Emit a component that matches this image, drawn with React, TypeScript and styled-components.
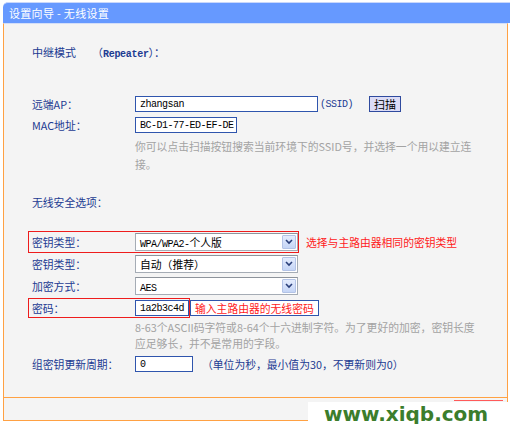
import styled, { createGlobalStyle } from "styled-components";

const GlobalStyle = createGlobalStyle`
  html, body {
    margin: 0;
    padding: 0;
    background: #ffffff;
  }
  body {
    font-family: "Noto Sans CJK SC", "Liberation Sans", sans-serif;
    font-size: 10.8px;
  }
`;

const ORANGE = "#ffa143";
const NAVY = "#1c3b92";
const MONO = `"Liberation Mono", "Noto Sans CJK SC", monospace`;

const Page = styled.div`
  position: relative;
  width: 510px;
  height: 424px;
  overflow: hidden;
  padding-top: 2px;
  box-sizing: border-box;
`;

const Header = styled.div`
  margin-left: 3px;
  height: 21px;
  background: #6699ff;
  border-top: 1px solid #c9d7fb;
  border-top-left-radius: 5px;
  display: flex;
  align-items: center;
  padding-left: 6px;
  box-sizing: border-box;
`;

const Title = styled.span`
  color: #ffffff;
  font-size: 11px;
  letter-spacing: 0.3px;
`;

const Panel = styled.div`
  margin-left: 3px;
  width: 505px;
  box-sizing: border-box;
  background: #f4f4f4;
  border-top: 1px solid #d3def8;
  border-left: 1px solid ${ORANGE};
  border-right: 1px solid ${ORANGE};
  border-bottom: 1px solid ${ORANGE};
  height: 375px;
  padding-left: 24px;
  display: flex;
  flex-direction: column;
`;

const Footer = styled.div`
  margin-left: 3px;
  width: 505px;
  height: 23px;
  box-sizing: border-box;
  background: #f4f4f4;
  border-left: 1px solid ${ORANGE};
  border-right: 1px solid ${ORANGE};
  border-bottom: 1px solid ${ORANGE};
`;

const Line = styled.div<{ $mt: number }>`
  display: flex;
  align-items: center;
  margin-top: ${({ $mt }) => $mt}px;
`;

const Field = styled.div<{ $boxed?: boolean; $h?: number }>`
  display: flex;
  align-items: center;
  height: ${({ $h }) => $h ?? 20}px;
  padding-left: 3px;
  border: 1px solid ${({ $boxed }) => ($boxed ? "#ee1c1c" : "transparent")};
  width: fit-content;
`;

const Label = styled.span`
  width: 103px;
  flex: none;
  color: ${NAVY};
  font-size: 10.8px;
  white-space: nowrap;
`;

const Mode = styled.span`
  color: ${NAVY};
  font-size: 11px;
  display: flex;
  align-items: center;
  gap: 16px;
`;

const Mono = styled.span`
  font-family: ${MONO};
  font-size: 10px;
  letter-spacing: -0.3px;
  font-weight: bold;
`;

const TextInput = styled.div<{ $w: number }>`
  width: ${({ $w }) => $w}px;
  height: 16px;
  box-sizing: border-box;
  border: 1px solid #2f55ad;
  background: #ffffff;
  padding-left: 4px;
  display: flex;
  align-items: center;
  color: #000;
  font-family: ${MONO};
  font-size: 10px;
  letter-spacing: -0.5px;
`;

const Select = styled.div`
  width: 163px;
  height: 18px;
  box-sizing: border-box;
  border: 1px solid #a5acb5;
  border-top-color: #8d939b;
  background: #ffffff;
  display: flex;
  align-items: center;
  padding-left: 4px;
  padding-right: 1px;
  color: #000;
  font-size: 10.8px;
`;

const SelectText = styled.span`
  flex: 1;
  white-space: nowrap;
`;

const SelectLatin = styled.span`
  font-family: ${MONO};
  font-size: 10px;
  letter-spacing: -0.5px;
`;

const Arrow = styled.div`
  width: 14px;
  height: 14px;
  box-sizing: border-box;
  border: 1px solid #b3c3e6;
  border-radius: 1px;
  background: linear-gradient(#e4ecfd, #c5d5f6);
  display: flex;
  align-items: center;
  justify-content: center;
`;

const Small = styled.span`
  color: ${NAVY};
  font-family: ${MONO};
  font-size: 10px;
  letter-spacing: -0.5px;
  margin-left: 1px;
`;

const ScanButton = styled.div`
  margin-left: 16px;
  width: 32px;
  height: 16px;
  box-sizing: border-box;
  border: 1px solid #2f4a9e;
  background: #dcdcf6;
  display: flex;
  align-items: center;
  justify-content: center;
  color: #000;
  font-size: 11px;
`;

const Hint = styled.div<{ $lh: number; $mt: number }>`
  margin-left: 107px;
  margin-top: ${({ $mt }) => $mt}px;
  width: 340px;
  color: #a3a3a3;
  line-height: ${({ $lh }) => $lh}px;
  font-size: 10.8px;
`;

const RedNote = styled.span<{ $outlined?: boolean }>`
  color: #ff1a1a;
  font-size: 10.8px;
  white-space: nowrap;
  ${({ $outlined }) =>
    $outlined
      ? `border: 1px solid #2f55ad; background: #fff; height: 16px; box-sizing: border-box; display: flex; align-items: center; padding: 0 4px;`
      : `margin-left: 7px;`}
`;

const BlueNote = styled.span`
  color: ${NAVY};
  font-size: 10.8px;
  margin-left: 8px;
  white-space: nowrap;
`;

const Watermark = styled.div`
  position: absolute;
  left: 308px;
  top: 402px;
  width: 202px;
  height: 22px;
  background: #ffffff;
  display: flex;
  align-items: flex-end;
  padding-left: 16px;
  box-sizing: border-box;
  color: #3b7d2c;
  font-family: "DejaVu Sans", "Liberation Sans", sans-serif;
  font-weight: bold;
  font-size: 20px;
  line-height: 20px;
  overflow: hidden;
`;

const RedMark = styled.div`
  position: absolute;
  left: 454px;
  top: 400px;
  width: 49px;
  height: 1px;
  background: #ff5a5a;
`;

const Chevron = () => (
  <svg width="8" height="6" viewBox="0 0 8 6">
    <path d="M1 1 L4 4 L7 1" fill="none" stroke="#2a3f7a" strokeWidth="1.6" />
  </svg>
);

const Dropdown = ({ latin, cjk }: { latin?: string; cjk?: string }) => (
  <Select>
    <SelectText>
      {latin && <SelectLatin>{latin}</SelectLatin>}
      {cjk}
    </SelectText>
    <Arrow>
      <Chevron />
    </Arrow>
  </Select>
);

export default function App() {
  return (
    <>
      <GlobalStyle />
      <Page>
        <Header>
          <Title>设置向导 - 无线设置</Title>
        </Header>
        <Panel>
          <Line $mt={17}>
            <Field>
              <Mode>
                <span>中继模式</span>
                <span>
                  （<Mono>Repeater</Mono>）：
                </span>
              </Mode>
            </Field>
          </Line>

          <Line $mt={31}>
            <Field $h={18}>
              <Label>远端AP：</Label>
              <TextInput $w={183}>zhangsan</TextInput>
            </Field>
            <Small>(SSID)</Small>
            <ScanButton>扫描</ScanButton>
          </Line>

          <Line $mt={1}>
            <Field $h={18}>
              <Label>MAC地址：</Label>
              <TextInput $w={102}>BC-D1-77-ED-EF-DE</TextInput>
            </Field>
          </Line>

          <Hint $lh={18} $mt={2}>
            你可以点击扫描按钮搜索当前环境下的SSID号，并选择一个用以建立连接。
          </Hint>

          <Line $mt={19}>
            <Field $h={18}>
              <Label>无线安全选项：</Label>
            </Field>
          </Line>

          <Line $mt={19}>
            <Field $boxed>
              <Label>密钥类型：</Label>
              <Dropdown latin="WPA/WPA2-" cjk="个人版" />
            </Field>
            <RedNote>选择与主路由器相同的密钥类型</RedNote>
          </Line>

          <Line $mt={0}>
            <Field>
              <Label>密钥类型：</Label>
              <Dropdown cjk="自动（推荐）" />
            </Field>
          </Line>

          <Line $mt={0}>
            <Field>
              <Label>加密方式：</Label>
              <Dropdown latin="AES" />
            </Field>
          </Line>

          <Line $mt={1}>
            <Field $boxed $h={18}>
              <Label>密码：</Label>
              <TextInput $w={54}>1a2b3c4d</TextInput>
            </Field>
            <RedNote $outlined>输入主路由器的无线密码</RedNote>
          </Line>

          <Hint $lh={16} $mt={1}>
            8-63个ASCII码字符或8-64个十六进制字符。为了更好的加密，密钥长度应足够长，并不是常用的字段。
          </Hint>

          <Line $mt={3}>
            <Field $h={18}>
              <Label>组密钥更新周期：</Label>
              <TextInput $w={58}>0</TextInput>
            </Field>
            <BlueNote>（单位为秒，最小值为30，不更新则为0）</BlueNote>
          </Line>
        </Panel>
        <Footer />
        <RedMark />
        <Watermark>www.xiqb.com</Watermark>
      </Page>
    </>
  );
}
